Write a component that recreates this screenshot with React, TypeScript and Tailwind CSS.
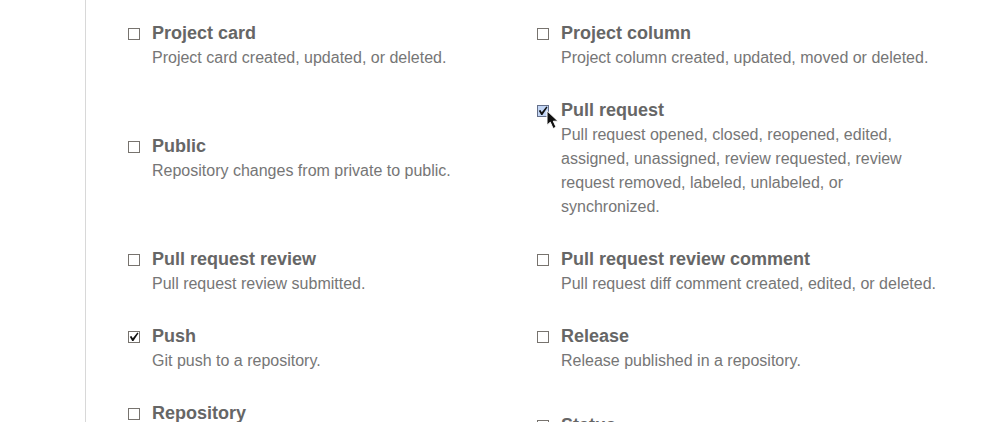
type Event = {
  id: string;
  title: string;
  description: string;
  checked?: boolean;
  active?: boolean;
};

const events: Event[] = [
  { id: "project-card", title: "Project card", description: "Project card created, updated, or deleted." },
  { id: "project-column", title: "Project column", description: "Project column created, updated, moved or deleted." },
  { id: "public", title: "Public", description: "Repository changes from private to public." },
  {
    id: "pull-request",
    title: "Pull request",
    description:
      "Pull request opened, closed, reopened, edited, assigned, unassigned, review requested, review request removed, labeled, unlabeled, or synchronized.",
    checked: true,
    active: true,
  },
  { id: "pull-request-review", title: "Pull request review", description: "Pull request review submitted." },
  {
    id: "pull-request-review-comment",
    title: "Pull request review comment",
    description: "Pull request diff comment created, edited, or deleted.",
  },
  { id: "push", title: "Push", description: "Git push to a repository.", checked: true },
  { id: "release", title: "Release", description: "Release published in a repository." },
  {
    id: "repository",
    title: "Repository",
    description: "Repository created, deleted, archived, unarchived, publicized, or privatized.",
  },
  { id: "status", title: "Status", description: "Commit status updated from the API." },
];

function Pointer() {
  return (
    <svg className="pointer-events-none absolute top-[5px] left-[9px] z-10" width="13" height="20" viewBox="0 0 13 20" aria-hidden="true">
      <path
        d="M1 .8v14.4l3.3-3 2.8 6.3 3-1.3-2.8-6H12z"
        fill="#111"
        stroke="#fff"
        strokeWidth="1"
      />
    </svg>
  );
}

function EventOption({ event }: { event: Event }) {
  return (
    <div className="flex items-start gap-3">
      <span className="relative mt-[7px] block size-3 shrink-0">
        <input
          id={event.id}
          type="checkbox"
          defaultChecked={event.checked}
          aria-describedby={`${event.id}-description`}
          className={`peer block size-3 appearance-none border ${
            event.active ? "border-[#65708a] bg-[#c3d6f5]" : "border-[#77736e] bg-white"
          }`}
        />
        <svg
          className="pointer-events-none absolute inset-0 hidden peer-checked:block"
          width="12"
          height="12"
          viewBox="0 0 12 12"
          aria-hidden="true"
        >
          <path d="M1.8 5.8 3.4 5l1.4 2.2L9.4 1.6l1.1.6L5.4 9.9H4.2z" fill="#111" />
        </svg>
        {event.active && <Pointer />}
      </span>
      <div className="min-w-0">
        <label htmlFor={event.id} className="block text-lg leading-[25px] font-bold text-[#666]">
          {event.title}
        </label>
        <p id={`${event.id}-description`} className="text-base leading-6 text-[#767676]">
          {event.description}
        </p>
      </div>
    </div>
  );
}

export default function App() {
  return (
    <main className="h-screen overflow-hidden bg-white pl-[85px] font-['Liberation_Sans',Arial,sans-serif]">
      <form className="min-h-full border-l border-[#d8d8d8] pt-[21px] pr-14 pl-[42px]">
        <fieldset className="grid grid-cols-2 items-center gap-x-1 gap-y-7">
          {events.map((event) => (
            <EventOption key={event.id} event={event} />
          ))}
        </fieldset>
      </form>
    </main>
  );
}
